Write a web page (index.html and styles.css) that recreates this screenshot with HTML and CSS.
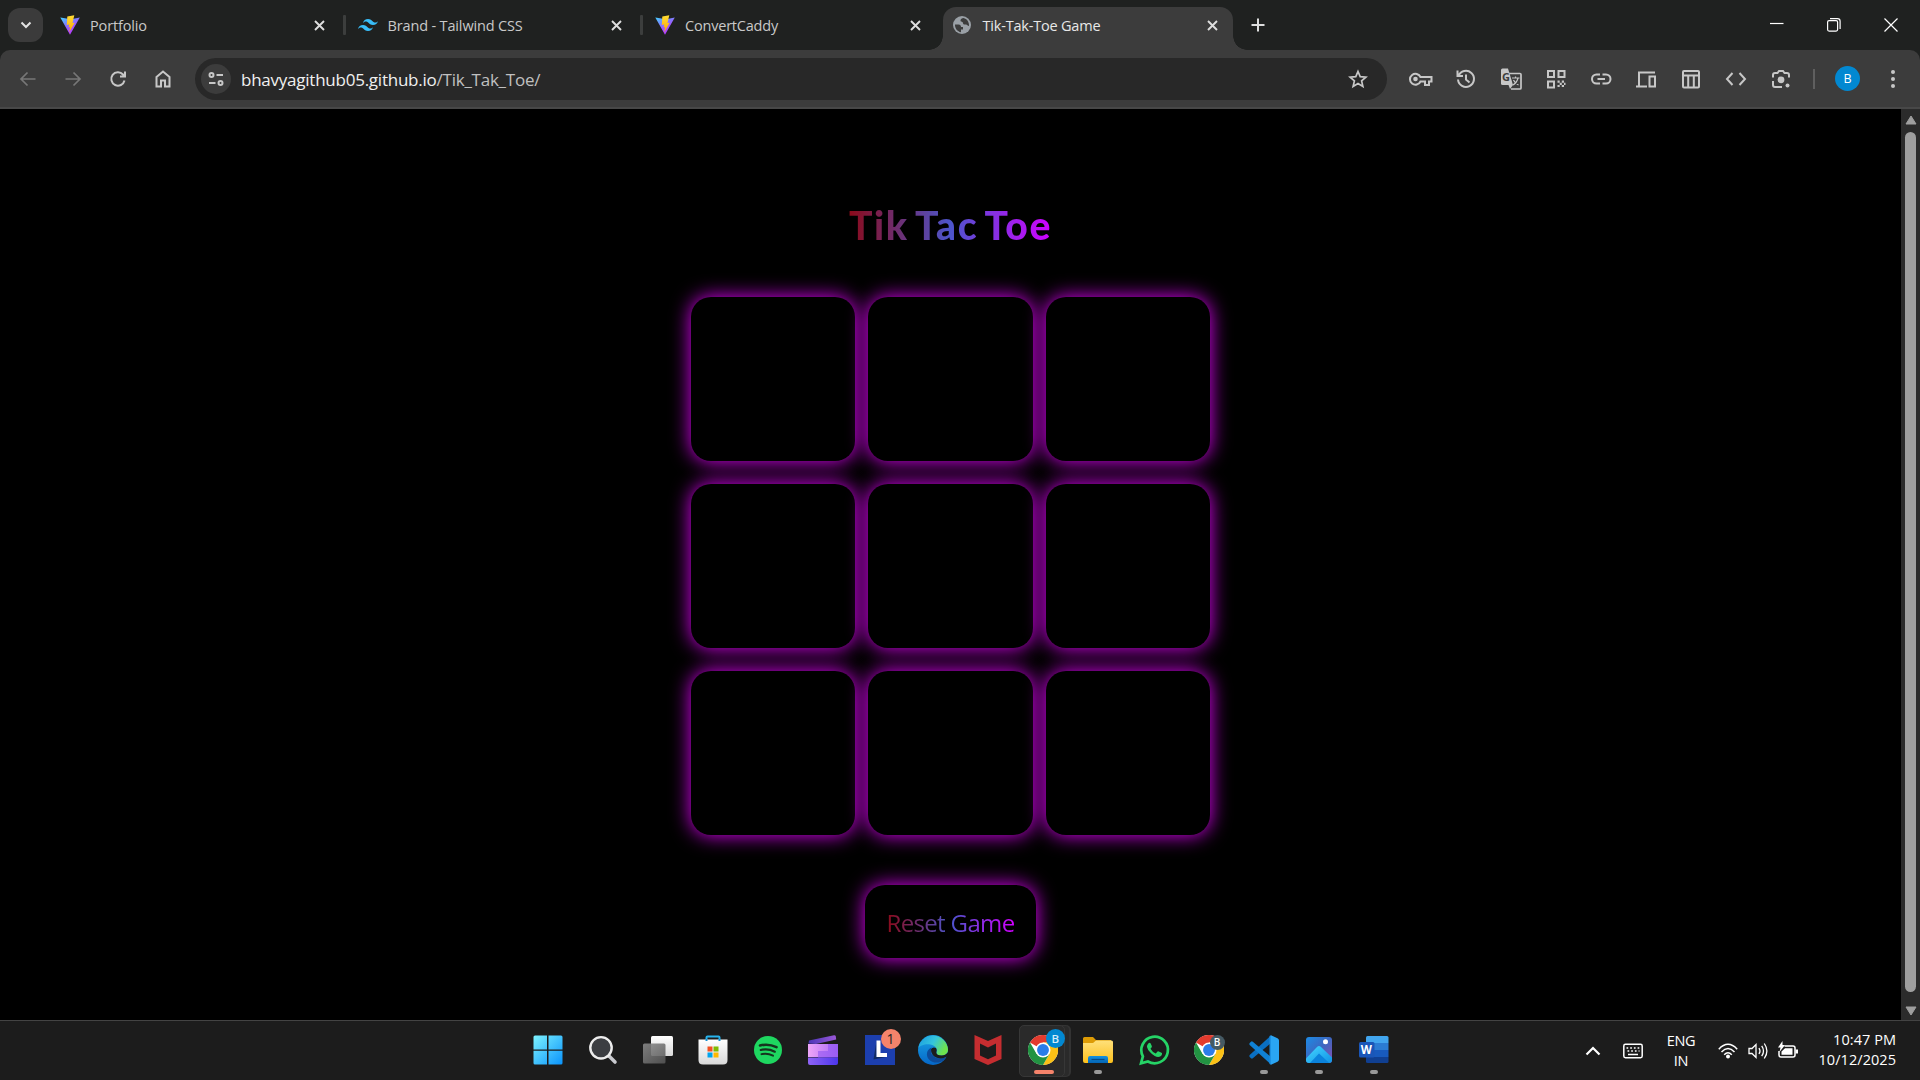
FILE: index.html
```html
<!DOCTYPE html>
<html lang="en">
<head>
<meta charset="utf-8">
<title>Tik-Tak-Toe Game</title>
<link rel="stylesheet" href="styles.css">
</head>
<body>
<svg class="defs" width="0" height="0">
  <defs>
    <linearGradient id="viteA" x1="0" y1="0" x2=".6" y2="1"><stop offset="0" stop-color="#41d1ff"/><stop offset=".6" stop-color="#9a5cff"/><stop offset="1" stop-color="#bd34fe"/></linearGradient>
    <linearGradient id="viteB" x1="0" y1="0" x2="0" y2="1"><stop offset="0" stop-color="#ffdd35"/><stop offset="1" stop-color="#ffa800"/></linearGradient>
    <linearGradient id="win" x1="0" y1="0" x2="1" y2="1"><stop offset="0" stop-color="#7df3ff"/><stop offset="1" stop-color="#0a93fb"/></linearGradient>
    <linearGradient id="white" x1="0" y1="0" x2="0" y2="1"><stop offset="0" stop-color="#fff"/><stop offset="1" stop-color="#d9d9d9"/></linearGradient>
    <linearGradient id="grey" x1="0" y1="0" x2="1" y2="1"><stop offset="0" stop-color="#8b8b8b"/><stop offset="1" stop-color="#555"/></linearGradient>
    <linearGradient id="clipTop" x1="0" y1="0" x2="1" y2="0"><stop offset="0" stop-color="#4a35b8"/><stop offset="1" stop-color="#9b58d8"/></linearGradient>
    <linearGradient id="clipMid" x1="0" y1="0" x2="1" y2="0"><stop offset="0" stop-color="#eea6f8"/><stop offset="1" stop-color="#a968f6"/></linearGradient>
    <linearGradient id="clipLow" x1="0" y1="0" x2="1" y2="0"><stop offset="0" stop-color="#8f63f5"/><stop offset="1" stop-color="#4c36ec"/></linearGradient>
    <linearGradient id="edgeTop" x1="0" y1="0" x2="1" y2=".4"><stop offset="0" stop-color="#1a9be0"/><stop offset=".55" stop-color="#35c5dd"/><stop offset="1" stop-color="#6fe34e"/></linearGradient>
    <linearGradient id="edgeLow" x1="0" y1="0" x2="0" y2="1"><stop offset="0" stop-color="#1aa3e4"/><stop offset="1" stop-color="#0567c8"/></linearGradient>
    <linearGradient id="folder" x1="0" y1="0" x2="0" y2="1"><stop offset="0" stop-color="#ffe07a"/><stop offset="1" stop-color="#fcc01c"/></linearGradient>
    <linearGradient id="folderBlue" x1="0" y1="0" x2="0" y2="1"><stop offset="0" stop-color="#1491df"/><stop offset="1" stop-color="#0465b5"/></linearGradient>
    <linearGradient id="photo" x1="0" y1="0" x2="1" y2="1"><stop offset="0" stop-color="#1c8ce6"/><stop offset=".5" stop-color="#3d66c0"/><stop offset="1" stop-color="#8a4fb0"/></linearGradient>
    <linearGradient id="hill" x1="0" y1="0" x2="1" y2="1"><stop offset="0" stop-color="#45d8ff"/><stop offset="1" stop-color="#1092e6"/></linearGradient>
    <symbol id="vite" viewBox="0 0 20 20"><path d="M.3 2.600 10 19.800 19.800 2.600 11 4.300Z" fill="url(#viteA)"/><path d="M14.300.2 7.300 1.600 6.800 9.900l2.400-.5-.6 3.100 1.500-.4-.9 5.200 5.500-9.600-2.200.4Z" fill="url(#viteB)"/></symbol>
    <symbol id="close" viewBox="0 0 11 11"><path d="M1 1l9 9M10 1l-9 9" stroke="currentColor" stroke-width="1.900" fill="none"/></symbol>
    <symbol id="chrome" viewBox="0 0 48 48">
      <circle cx="24" cy="24" r="24" fill="#fff"/>
      <path d="M24 24 3.200 12A24 24 0 0 1 44.800 12H24Z" fill="#e33b2e"/>
      <path d="M24 12H44.800A24 24 0 0 1 24 48L34.400 30Z" fill="#fbc116"/>
      <path d="M13.600 30 3.200 12A24 24 0 0 0 24 48L34.400 30Z" fill="#229342"/>
      <circle cx="24" cy="24" r="12" fill="#fff"/><circle cx="24" cy="24" r="9.500" fill="#2b7de9"/>
    </symbol>
  </defs>
</svg>

<header class="tabstrip">
  <button class="tab-search"><svg width="12" height="8" viewBox="0 0 12 8"><path d="M1.500 1.500 6 6l4.500-4.500" class="ln w2"/></svg></button>
  <div class="tab">
    <svg class="fav" width="20" height="20"><use href="#vite"/></svg><span class="t t1">Portfolio</span>
    <svg class="x" width="11" height="11"><use href="#close"/></svg><i class="sep"></i>
  </div>
  <div class="tab">
    <svg class="fav" width="20" height="20" viewBox="0 0 24 24"><path d="M12 4.800c-3.200 0-5.200 1.600-6 4.800 1.200-1.600 2.600-2.200 4.200-1.800.913.228 1.565.89 2.288 1.624C13.666 10.618 15.027 12 18 12c3.200 0 5.200-1.600 6-4.800-1.200 1.600-2.600 2.200-4.200 1.800-.913-.228-1.565-.89-2.288-1.624C16.337 6.182 14.976 4.800 12 4.800zM6 12c-3.200 0-5.200 1.600-6 4.800 1.200-1.600 2.600-2.200 4.200-1.800.913.228 1.565.89 2.288 1.624C7.666 17.818 9.027 19.200 12 19.200c3.200 0 5.200-1.600 6-4.800-1.200 1.600-2.600 2.200-4.200 1.800-.913-.228-1.565-.89-2.288-1.624C10.337 13.382 8.976 12 6 12z" fill="#38bdf8"/></svg><span class="t t2">Brand - Tailwind CSS</span>
    <svg class="x" width="11" height="11"><use href="#close"/></svg><i class="sep"></i>
  </div>
  <div class="tab">
    <svg class="fav" width="20" height="20"><use href="#vite"/></svg><span class="t t3">ConvertCaddy</span>
    <svg class="x" width="11" height="11"><use href="#close"/></svg>
  </div>
  <div class="tab active">
    <svg class="fav" width="18" height="18" viewBox="0 0 18 18"><circle cx="9" cy="9" r="9" fill="#9aa0a6"/><path d="M2 8.500h3.500c1.800 0 2.500 1 2.500 2.500h2v2.500H8v2.700C4.500 15.700 1.800 12.500 2 8.500ZM10.500 2C9 2.200 7.500 3 7.500 4.500c0 1.800 2.500 1 2.500 2.500 0 1.800 1.500 1.500 3 1.500 1.200 0 1.500 1.500 3 1.500.3-4-2-7.300-5.500-8Z" fill="#3c3c3c"/></svg><span class="t t4">Tik-Tak-Toe Game</span>
    <svg class="x" width="11" height="11"><use href="#close"/></svg>
  </div>
  <svg class="newtab" width="14" height="14" viewBox="0 0 14 14"><path d="M7 .5v13M.5 7h13" class="ln w2"/></svg>
  <div class="winctl">
    <svg width="14" height="14" viewBox="0 0 14 14"><path d="M0 5.500h13.500" class="wc"/></svg>
    <svg width="14" height="14" viewBox="0 0 14 14"><rect x=".6" y="2.600" width="10" height="10.500" rx="1.500" class="wc"/><path d="M3 .6h7.500q2.600 0 2.600 2.600V11" class="wc"/></svg>
    <svg width="14" height="14" viewBox="0 0 14 14"><path d="M.5.5l13 13M13.500.5l-13 13" class="wc"/></svg>
  </div>
</header>

<nav class="toolbar">
  <div class="nav">
    <span class="ib dim"><svg width="20" height="20" viewBox="0 0 20 20"><path d="M17.500 10H3M9.500 3.500 3 10l6.500 6.500" class="ln"/></svg></span>
    <span class="ib dim"><svg width="20" height="20" viewBox="0 0 20 20"><path d="M2.500 10H17M10.500 3.500 17 10l-6.500 6.500" class="ln"/></svg></span>
    <span class="ib"><svg width="20" height="20" viewBox="0 0 20 20"><path d="M16.500 11.500A6.700 6.700 0 1 1 15 5.500l1.500 1.700M17 2.500v5h-5" class="ln w2"/></svg></span>
    <span class="ib"><svg width="20" height="20" viewBox="0 0 20 20"><path d="M3.500 8 10 2.500 16.500 8v9.500H12v-6H8v6H3.500Z" class="ln w2"/></svg></span>
  </div>
  <div class="omnibox">
    <span class="site"><svg width="16" height="16" viewBox="0 0 16 16"><g class="ln w2"><circle cx="3.500" cy="4" r="2"/><path d="M8.500 4H15M1 12h6.500"/><circle cx="12.500" cy="12" r="2"/></g></svg></span>
    <span class="url">bhavyagithub05.github.io<span>/Tik_Tak_Toe/</span></span>
    <svg class="star" width="20" height="20" viewBox="0 0 20 20"><path d="m10 2.500 2.200 5.200 5.700.5-4.300 3.700 1.300 5.500L10 14.500l-4.900 2.900 1.300-5.500L2.100 8.200l5.700-.5Z" class="ln"/></svg>
  </div>
  <div class="ext">
    <span class="ib"><svg width="24" height="20" viewBox="0 0 24 20"><g class="ln w2"><path d="M11.500 8A5.500 5.500 0 1 0 11.500 12.500H16V16h4v-3.500h2.500V8Z"/></g><circle cx="6.500" cy="10" r="2.300" fill="currentColor"/></svg></span>
    <span class="ib"><svg width="22" height="22" viewBox="0 0 22 22"><path d="M3.500 8A8 8 0 1 1 3 11.500M2.500 2.500V8H8M11 6.500V11.500l3.500 3" class="ln w2"/></svg></span>
    <span class="ib"><svg width="22" height="22" viewBox="0 0 22 22"><path d="M8 5.500h12q1 0 1 1V20q0 1-1 1H11" class="ln"/><path d="M2.500.5H8L13 17H2.500q-1.500 0-1.500-1.500V2Q1 .5 2.500.5Z" fill="currentColor"/><path d="M8.500 17H13l-3 4Z" fill="currentColor"/><text x="2" y="13" class="gt">G</text><path d="M12 10h7.500M15.500 8.500V10M18 10q-1 4.500-5 7M13.500 12q1.500 3.500 5 5" class="ln thin"/></svg></span>
    <span class="ib"><svg width="20" height="20" viewBox="0 0 20 20"><g class="ln w2"><rect x="2" y="2" width="6" height="6"/><rect x="12.500" y="2" width="6" height="6"/><rect x="2" y="12.500" width="6" height="6"/></g><path d="M11.500 11.500h2.200v2.200h-2.200zM15.800 11.500H18v2.200h-2.200zM13.700 13.700h2.100v2.200h-2.100zM11.500 15.900h2.200v2.200h-2.200zM15.800 15.900H18v2.200h-2.200zM18 13.700h1.500v2.200H18z" fill="currentColor"/></svg></span>
    <span class="ib"><svg width="22" height="20" viewBox="0 0 22 20"><path d="M10 5.500H6.500a4.500 4.500 0 0 0 0 9H10M12.500 5.500H16a4.500 4.500 0 0 1 0 9H12.500M7.500 10h7.500" class="ln w2"/></svg></span>
    <span class="ib"><svg width="22" height="20" viewBox="0 0 22 20"><path d="M1 17.500H12M4 17V3.500H20M14.500 7.500h5.500v10h-5.500Z" class="ln w2"/></svg></span>
    <span class="ib"><svg width="20" height="20" viewBox="0 0 20 20"><path d="M3 2h14q1 0 1 1v14.500q0 1-1 1H3q-1 0-1-1V3q0-1 1-1ZM2 6.500H18M7.200 7v11.500M12.800 7v11.500" class="ln w2"/></svg></span>
    <span class="ib"><svg width="22" height="20" viewBox="0 0 22 20"><path d="M7.500 4 2 10l5.500 6M14.500 4 20 10l-5.500 6" class="ln w2"/></svg></span>
    <span class="ib"><svg width="20" height="20" viewBox="0 0 20 20"><path d="M2 8.500V6q0-2 2-2h2.500L8 2h4l1.500 2H16q2 0 2 2v2.500M2 12v4q0 2 2 2h7" class="ln w2"/><circle cx="10" cy="10.800" r="3.400" fill="currentColor"/><circle cx="16.500" cy="16.500" r="2" fill="currentColor"/></svg></span>
  </div>
  <i class="bar"></i>
  <span class="avatar">B</span>
  <svg class="dots" width="4" height="18" viewBox="0 0 4 18"><g fill="#c7c7c7"><circle cx="2" cy="2" r="2"/><circle cx="2" cy="9" r="2"/><circle cx="2" cy="16" r="2"/></g></svg>
</nav>

<div class="viewport">
  <main class="game">
    <h1 class="title">Tik Tac Toe</h1>
    <div class="board">
      <div class="cell"></div><div class="cell"></div><div class="cell"></div>
      <div class="cell"></div><div class="cell"></div><div class="cell"></div>
      <div class="cell"></div><div class="cell"></div><div class="cell"></div>
    </div>
    <button class="reset"><span>Reset Game</span></button>
  </main>
  <aside class="scroll">
    <svg width="12" height="10" viewBox="0 0 12 10"><path d="M6 1 11 9H1Z" class="arr"/></svg>
    <i class="thumb"></i>
    <svg width="12" height="10" viewBox="0 0 12 10"><path d="M6 9 11 1H1Z" class="arr"/></svg>
  </aside>
</div>

<footer class="taskbar">
  <div class="apps">
    <span class="app"><svg width="30" height="30" viewBox="0 0 30 30"><path d="M2 .5h12v14H.5V2Q.5.5 2 .5ZM15.500.5H28q1.500 0 1.500 1.500v12.500h-14ZM.5 15.800H14v13.700H2Q.5 29.500.5 28ZM15.500 15.800h14V28q0 1.500-1.500 1.500H15.500Z" fill="url(#win)"/></svg></span>
    <span class="app"><svg width="30" height="30" viewBox="0 0 30 30"><path d="m21 21 6 6" stroke="#c9cacf" stroke-width="3.600" stroke-linecap="round"/><circle cx="13" cy="12.800" r="10.700" fill="#3c3e42" stroke="#ededed" stroke-width="2.400"/></svg></span>
    <span class="app"><svg width="30" height="30" viewBox="0 0 30 30"><rect x="8" y="1" width="22" height="20" rx="1.500" fill="url(#white)"/><rect x="0" y="8.500" width="22.500" height="20" rx="1.500" fill="url(#grey)" opacity=".88"/></svg></span>
    <span class="app"><svg width="30" height="30" viewBox="0 0 30 30"><path d="M8.500 7V2.500q0-1 1-1h11q1 0 1 1V7" fill="none" stroke="#27b4ee" stroke-width="2"/><path d="M.5 4.500h29V25q0 4.500-4.500 4.500H5Q.5 29.500.5 25Z" fill="url(#white)"/><path d="M7.500 4v2h2V4M20.500 4v2h2V4" fill="#1590cf"/><path d="M9.500 11.500h5v5h-5z" fill="#f25022"/><path d="M15.500 11.500h5v5h-5z" fill="#7fba00"/><path d="M9.500 17.500h5v5h-5z" fill="#00a4ef"/><path d="M15.500 17.500h5v5h-5z" fill="#ffb900"/></svg></span>
    <span class="app"><svg width="28" height="28" viewBox="0 0 28 28"><circle cx="14" cy="14" r="14" fill="#1ed760"/><g fill="none" stroke="#16341f" stroke-linecap="round"><path d="M6 9.500q8.500-2.200 16.500 1.700" stroke-width="2.600"/><path d="M6.800 14q7.200-1.900 14 1.700" stroke-width="2.200"/><path d="M7.500 18.200q6-1.500 11.500 1.500" stroke-width="1.900"/></g></svg></span>
    <span class="app"><svg width="30" height="30" viewBox="0 0 30 30"><path d="M.5 8.500 1 5.500 26 .3q1.500-.3 1.800 1.200L28.200 4.500 8 9Z" fill="url(#clipTop)"/><path d="M0 9h30v13H0Z" fill="url(#clipMid)"/><path d="M20 9h10v7H20ZM10 16h20v7H10Z" fill="#9055f2" opacity=".6"/><path d="M0 22.500h30V28q0 2-2 2H2q-2 0-2-2Z" fill="url(#clipLow)"/></svg></span>
    <span class="app"><svg class="lapp" width="30" height="30" viewBox="0 0 30 30"><path d="M0 0h30v30H0Z" fill="#1c3fae"/><path d="M8.500 24.500 11.500 6V22H21Z" fill="#102b62"/><path d="M11.500 5.500h4V18H22v4H11.500Z" fill="#fff"/></svg><b class="badge">1</b></span>
    <span class="app"><svg width="30" height="30" viewBox="0 0 30 30"><circle cx="15" cy="15" r="15" fill="url(#edgeLow)"/><path d="M.3 13A15 15 0 0 1 30 14.500C30 18.500 27 20.500 23.500 20.500 19.500 20.500 18 19 18.500 17.500 20 14 17.500 10.500 12.500 9.500 7 8.500 1.500 11 .3 13Z" fill="url(#edgeTop)"/><path d="M13.500 12.500c-5 2-6 8-2.500 12 3 3.500 10 4.500 15 .5 1-1 2.500-2.500 1.500-3C24 24.500 17 24 13.500 19Z" fill="#0d4b9a"/><path d="M13 14.500q1.500-3 5-1.500 1.600 2.500.3 4.500.2 3 5.200 3 4 0 6.300-3.200L30.500 21 28 22q-4 2.300-9 .8-6-2.300-6-8.300Z" fill="#1c1c1c"/></svg></span>
    <span class="app"><svg width="28" height="30" viewBox="0 0 28 30"><path d="M.5 0 14 6 27.500 0V24L14 30 .5 24ZM6 8.500V20.500l8 3.700 8-3.700V8.500l-8 4Z" fill="#c52d30" fill-rule="evenodd"/></svg></span>
    <span class="app front"><svg width="30" height="30"><use href="#chrome"/></svg><b class="who blue">B</b><i class="run on"></i></span>
    <span class="app"><svg width="30" height="30" viewBox="0 0 30 30"><path d="M0 3.500Q0 2 1.500 2H10l3 3h15v8H0Z" fill="#dd9b05"/><path d="M0 8h10l3-2.500h15.500Q30 5.500 30 7V26q0 2-2 2H2q-2 0-2-2Z" fill="url(#folder)"/><path d="M5 28V23q0-2 2-2H23q2 0 2 2v5Z" fill="url(#folderBlue)"/><path d="M8.500 24.500h13" stroke="#064a86" stroke-width="1.200"/></svg><i class="run"></i></span>
    <span class="app"><svg width="30" height="30" viewBox="0 0 30 30"><path d="M2 28.300 3.900 21.300A13.300 13.300 0 1 1 8.900 26.500Z" fill="none" stroke="#25d366" stroke-width="2.700"/><path d="M9.500 8.200q1.500-1 2.300.5l1.100 2.600q.3.800-1.400 2.500 2 3.600 5.300 4.800l1.700-2q.5-.5 1.300-.1l2.700 1.300q.8.400.5 1.500-.9 2.700-3.900 2.700-3.200-.1-7-3.700-3.800-3.600-4.200-6.600 0-2 1.600-3.500Z" fill="#25d366"/></svg></span>
    <span class="app"><svg width="30" height="30"><use href="#chrome"/></svg><b class="who dark">B</b></span>
    <span class="app"><svg width="30" height="30" viewBox="0 0 30 30"><path d="M22 8 3.800 23.300Q3 24 2 23.300L.7 22q-.9-1 0-1.900L22 .5Z" fill="#0a6fc2"/><path d="M22 22 3.800 6.700Q3 6 2 6.700L.7 8q-.9 1 0 1.900L22 29.500Z" fill="#1082d6"/><path d="M22 .2 28.500 3.300Q30 4 30 5.500V24.500Q30 26 28.500 26.700L22 29.800Z" fill="#2aa5f3"/><path d="M22 .2V29.800L20.500 29 20.500 1Z" fill="#1c90e2"/></svg><i class="run"></i></span>
    <span class="app"><svg width="26" height="26" viewBox="0 0 26 26"><rect width="26" height="26" rx="3" fill="url(#photo)"/><path d="M0 21.500 11 10q2-1.800 4 0L26 20.500V23q0 3-3 3H3q-3 0-3-3Z" fill="url(#hill)"/><path d="M4 26 13 16.500l10 9.300-1 .2Z" fill="#0b83dc"/><circle cx="19.500" cy="4.700" r="2.500" fill="#fff"/></svg><i class="run"></i></span>
    <span class="app"><svg width="30" height="28" viewBox="0 0 30 28"><path d="M7 7V1.500Q7 0 8.500 0H28q1.500 0 1.500 1.500V7Z" fill="#41a5ee"/><path d="M7 7h22.500v7H7Z" fill="#2b7cd3"/><path d="M7 14h22.500v7H7Z" fill="#185abd"/><path d="M7 21h22.500v4.500q0 1.500-1.500 1.500H8.500Q7 27 7 25.500Z" fill="#103f91"/><rect x="0" y="6" width="15.500" height="15.500" rx="1.500" fill="#1a56b8"/><text x="1.800" y="18" class="wt">W</text></svg><i class="run"></i></span>
  </div>
  <div class="tray">
    <svg width="16" height="10" viewBox="0 0 16 10"><path d="M1.500 8.500 8 2l6.500 6.500" class="tl w2"/></svg>
    <svg class="kb" width="20" height="16" viewBox="0 0 20 16"><rect x=".8" y="1.300" width="18.400" height="13.400" rx="1.600" class="tl"/><path d="M3.500 5h13M4.500 8h12" stroke="#fff" stroke-width="1.700" stroke-dasharray="1.700 2"/><path d="M5 11.500h10" class="tl"/></svg>
    <span class="lang">ENG<br>IN</span>
    <svg class="wifi" width="20" height="16" viewBox="0 0 20 16"><path d="M.8 6.200Q10-3.500 19.200 6.200M3.500 9Q10 2.200 16.500 9M6.200 11.700q3.800-3.800 7.600 0" class="tl"/><circle cx="10" cy="13.600" r="2" fill="#fff"/></svg>
    <svg class="vol" width="20" height="18" viewBox="0 0 20 18"><path d="M1 6.500H4L8 2.500v13L4 11.500H1ZM11 6q2 3 0 6M13.700 3.800q3.600 5.200 0 10.400M16.300 1.500q5.200 7.500 0 15" class="tl thin"/></svg>
    <svg class="bat" width="20" height="18" viewBox="0 0 20 18"><path d="M6.500 5H15q2 0 2 2v7q0 2-2 2H3q-2 0-2-2v-4" class="tl"/><path d="M7 7.200h7.500v6.500H3.500V10.500ZM17.500 8.500H20v4h-2.500ZM4.500 0 0 6.500h2.500L1.500 11 7 4H4.500Z" fill="#fff"/></svg>
    <span class="clock"><span>10:47 PM</span><span>10/12/2025</span></span>
  </div>
</footer>
</body>
</html>
```
FILE: styles.css
```css
* { box-sizing: border-box; }
html, body { height: 100%; }
body {
  margin: 0;
  width: 1920px;
  height: 1080px;
  overflow: hidden;
  display: flex;
  flex-direction: column;
  background: #1f2120;
  font-family: "Open Sans", "Noto Sans", sans-serif;
  color: #fff;
}
button { border: 0; padding: 0; font: inherit; }
svg { display: block; flex: none; overflow: visible; }
.defs { position: absolute; }
.ln { fill: none; stroke: currentColor; stroke-width: 1.7; }
.w2 { stroke-width: 2; }
.thin { stroke-width: 1.2; }

/* Tab strip */
.tabstrip {
  height: 50px;
  flex: none;
  display: flex;
  padding-left: 8px;
  color: #dedede;
}
.tab-search {
  width: 35px;
  height: 34px;
  margin: 8px 5px 0 0;
  border-radius: 12px;
  background: #3b3b3b;
  color: #e3e3e3;
  display: flex;
  align-items: center;
  justify-content: center;
}
.tab {
  width: 297.5px;
  height: 50px;
  display: flex;
  align-items: center;
  padding-left: 12px;
  font-size: 14.5px;
}
.fav { margin-right: 10px; }
.t { width: 225px; white-space: nowrap; color: #c9c9c9; letter-spacing: -.2px; }
.t1 { letter-spacing: -.15px; }
.t2 { letter-spacing: -.15px; }
.t4 { color: #e8e8e8; }
.sep { width: 3px; height: 20px; margin-left: 18px; border-radius: 1px; background: #3c3e3d; }
.tab.active {
  width: 290px;
  height: 43px;
  margin: 7px 0 0 2.5px;
  padding: 0 0 16px 9.5px;
  padding-bottom: 7px;
  border-radius: 13px 13px 0 0;
  background: #3c3c3c;
  position: relative;
}
.tab.active .fav { margin-right: 12px; }
.tab.active .t { width: 224px; }
.tab.active::before, .tab.active::after {
  content: "";
  position: absolute;
  bottom: 0;
  width: 14px;
  height: 14px;
}
.tab.active::before { left: -14px; background: radial-gradient(circle at 0 0, transparent 13.5px, #3c3c3c 14px); }
.tab.active::after { right: -14px; background: radial-gradient(circle at 100% 0, transparent 13.5px, #3c3c3c 14px); }
.newtab { margin: 18px 0 0 18px; }
.winctl { display: flex; gap: 43px; margin: 18px 22px 0 auto; }
.wc { fill: none; stroke: #fff; stroke-width: 1.2; }

/* Toolbar */
.toolbar {
  height: 59px;
  flex: none;
  display: flex;
  align-items: center;
  padding-left: 5px;
  background: #3c3c3c;
  border-bottom: 2px solid #484848;
  border-radius: 10px 10px 0 0;
  color: #c7c7c7;
}
.nav { display: flex; width: 190px; }
.ib { width: 45px; display: flex; align-items: center; justify-content: center; }
.dim { color: #777; }
.omnibox {
  width: 1192px;
  height: 42px;
  border-radius: 21px;
  background: #282828;
  display: flex;
  align-items: center;
  padding: 0 19.5px 0 6px;
}
.site {
  width: 30px;
  height: 30px;
  border-radius: 50%;
  background: #3c3c3c;
  display: flex;
  align-items: center;
  justify-content: center;
}
.url { margin: 2px 0 0 10px; flex: 1; font-size: 17px; color: #f0f0f0; letter-spacing: -.24px; }
.url span { color: #c0c0c0; }
.ext { display: flex; margin-left: 11px; }
.gt { font: bold 11px "Open Sans", sans-serif; fill: #3c3c3c; }
.bar { width: 2px; height: 20px; margin: 0 20px 0 10px; background: #5f5f5f; }
.avatar {
  width: 25px;
  height: 25px;
  border-radius: 50%;
  background: #0288d1;
  color: #fff;
  font-size: 12.5px;
  line-height: 25px;
  text-align: center;
}
.dots { margin-left: 30.5px; }

/* Page */
.viewport { flex: 1; display: flex; background: #000; }
.game { width: 1901px; display: flex; flex-direction: column; align-items: center; }
.title, .reset span {
  background: linear-gradient(90deg, #8b0a1a, #4d55cc 50%, #d000ff);
  -webkit-background-clip: text;
  background-clip: text;
  color: transparent;
}
.title {
  margin: 90px 0 0;
  font: 900 39px/52px Lato, sans-serif;
  letter-spacing: 1.7px;
  word-spacing: -3.5px;
  white-space: nowrap;
}
.board {
  margin-top: 46px;
  display: grid;
  grid-template-columns: repeat(3, 164.2px);
  grid-auto-rows: 164px;
  gap: 23px 13.2px;
}
.cell, .reset {
  border-radius: 20px;
  background: #000;
  box-shadow: 0 0 20px #e000fa;
}
.reset { width: 171px; height: 73px; margin-top: 50px; padding-top: 1px; }
.reset span { font-size: 24px; letter-spacing: -.65px; }
.scroll {
  width: 19px;
  background: #2b2b2b;
  display: flex;
  flex-direction: column;
  align-items: center;
  padding: 6px 0 4px;
}
.arr { fill: #9f9f9f; stroke: #9f9f9f; stroke-linejoin: round; }
.thumb { flex: 1; width: 11px; margin: 7px 0 14px; border-radius: 6px; background: #9f9f9f; }

/* Taskbar */
.taskbar {
  height: 60px;
  flex: none;
  display: flex;
  background: #1c1c1c;
  border-top: 1px solid #434343;
}
.apps { display: flex; margin-left: 520px; }
.app { width: 55.1px; height: 58px; display: flex; align-items: center; justify-content: center; position: relative; }
.lapp { margin-left: 3px; }
.badge, .who, .run { position: absolute; }
.badge, .who { border-radius: 50%; text-align: center; font-weight: 400; }
.badge { left: 30px; top: 8px; width: 20px; height: 20px; background: #f5836b; color: #222; font-size: 14px; line-height: 20px; }
.who { width: 19px; height: 19px; left: 30px; top: 8px; font-size: 11.5px; line-height: 19px; font-weight: 600; }
.blue { background: #0288d1; color: #d7ecf8; }
.dark { background: #455a64; width: 15px; height: 15px; left: 28.5px; top: 14px; line-height: 15px; font-size: 10px; }
.front::before {
  content: "";
  position: absolute;
  left: 3px;
  top: 4px;
  width: 44px;
  height: 50px;
  border: 1px solid #373737;
  border-radius: 5px;
  background: #2a2a2a;
  box-shadow: 5px 0 0 -1px #2a2a2a, 6px 0 0 0 #333;
}
.front svg { position: relative; }
.run { left: 23.5px; top: 49px; width: 8px; height: 4px; border-radius: 2px; background: #999; }
.run.on { left: 18px; width: 20px; background: #f5836b; }
.wt { font: bold 11.5px "Open Sans", sans-serif; fill: #fff; }
.tray { display: flex; align-items: center; margin-left: auto; margin-right: 24px; font-size: 14.5px; line-height: 20px; }
.tl { fill: none; stroke: #fff; stroke-width: 1.5; }
.tl.w2 { stroke-width: 2.2; }
.tl.thin { stroke-width: 1.3; }
.kb { margin-left: 22px; }
.lang { width: 40px; margin-left: 18px; text-align: center; letter-spacing: -.3px; }
.wifi { margin-left: 17px; }
.vol { margin-left: 10px; }
.bat { margin-left: 10px; margin-top: -2px; }
.clock { width: 98px; margin-top: -1px; display: flex; flex-direction: column; text-align: right; letter-spacing: .05px; }
```
